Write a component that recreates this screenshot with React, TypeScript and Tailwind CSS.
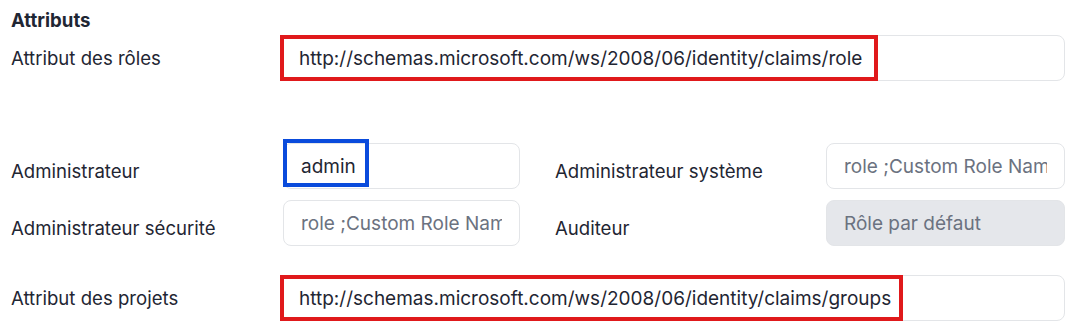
import React from 'react';

const font = { fontFamily: 'Inter, "Noto Sans", sans-serif' };

const Field: React.FC<{ value?: string; placeholder?: string; disabled?: boolean; className?: string }> = ({
  value,
  placeholder,
  disabled,
  className = '',
}) => (
  <input
    readOnly
    defaultValue={value}
    placeholder={placeholder}
    className={`h-[46px] rounded-[8px] border border-[#e3e5e8] px-[17px] text-[19px] text-[#1f2633] placeholder:text-[#6b7280] outline-none ${
      disabled ? 'bg-[#e5e7eb]' : 'bg-white'
    } ${className}`}
    style={font}
  />
);

const App: React.FC = () => {
  return (
    <div className="w-[1085px] h-[325px] bg-white pl-[11px] pt-[9px] text-[18.6px] text-[#1f2633]" style={font}>
      <h2 className="font-bold leading-[23px] text-[18.6px]">Attributs</h2>

      <div className="flex items-center mt-[3px]">
        <label className="w-[270px] pt-[2px]">Attribut des rôles</label>
        <div className="relative w-[784px]">
          <Field value="http://schemas.microsoft.com/ws/2008/06/identity/claims/role" className="w-full" />
          <div className="absolute left-[-1px] top-0 w-[598px] h-[46px] border-[4px] border-[#e0191b]" />
        </div>
      </div>

      <div className="grid grid-cols-2 gap-x-[34px] gap-y-[11px] mt-[62px] w-[1054px]">
        <div className="flex items-start">
          <label className="w-[272px] pt-[15px]">Administrateur</label>
          <div className="relative w-[237px]">
            <Field value="admin" className="w-full" />
            <div className="absolute left-0 top-[-4px] w-[86px] h-[48px] border-[4px] border-[#0a4bdc]" />
          </div>
        </div>
        <div className="flex items-start">
          <label className="w-[272px] pt-[15px]">Administrateur système</label>
          <Field placeholder="role ;Custom Role Name" className="w-[239px]" />
        </div>
        <div className="flex items-start">
          <label className="w-[272px] pt-[15px]">Administrateur sécurité</label>
          <Field placeholder="role ;Custom Role Name" className="w-[237px]" />
        </div>
        <div className="flex items-start">
          <label className="w-[272px] pt-[15px]">Auditeur</label>
          <Field placeholder="Rôle par défaut" disabled className="w-[239px]" />
        </div>
      </div>

      <div className="flex items-center mt-[29px]">
        <label className="w-[270px] pt-[2px]">Attribut des projets</label>
        <div className="relative w-[784px]">
          <Field value="http://schemas.microsoft.com/ws/2008/06/identity/claims/groups" className="w-full" />
          <div className="absolute left-[-1px] top-0 w-[623px] h-[46px] border-[4px] border-[#e0191b]" />
        </div>
      </div>
    </div>
  );
};

export default App;
